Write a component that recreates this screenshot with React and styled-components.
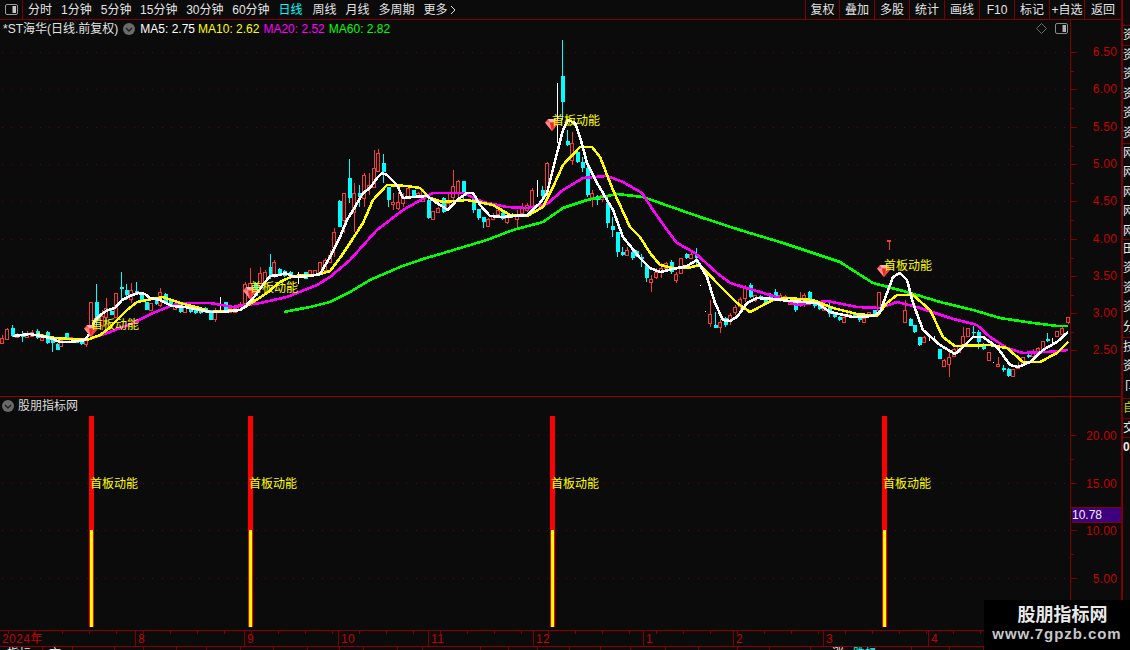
import React from 'react';
import styled, { createGlobalStyle } from 'styled-components';

const LINE = '#7d0000';
const BG = '#0b0b0b';
const CJK = '"Liberation Sans", "Noto Sans CJK SC", sans-serif';

const Global = createGlobalStyle`
  html, body { margin: 0; padding: 0; background: ${BG}; overflow: hidden; }
`;
const Page = styled.div`
  position: relative; width: 1130px; height: 650px; overflow: hidden; display: flex;
  background: ${BG}; font: 12px/16px ${CJK}; color: #e4e4e4;
`;
const Main = styled.div`
  width: 1121px; height: 650px; display: flex; flex-direction: column; flex: none;
`;
const Toolbar = styled.div`
  height: 19px; border-bottom: 1px solid ${LINE}; display: flex; align-items: stretch; flex: none;
`;
const ToggleBox = styled.div`
  width: 22px; border-right: 1px solid ${LINE}; display: flex; align-items: center; justify-content: center;
  margin-right: 5px;
`;
const Periods = styled.div`
  display: flex; gap: 9px; align-items: center; flex: 1;
`;
const Period = styled.span`
  color: ${p => (p.$active ? '#00ffff' : '#e4e4e4')}; white-space: nowrap; display: inline-flex; align-items: center; gap: 3px;
  margin-right: ${p => p.$mr || 0}px;
`;
const Actions = styled.div`display: flex;`;
const Action = styled.div`
  width: ${p => p.$w}px; box-sizing: border-box; border-left: 1px solid ${LINE};
  display: flex; align-items: center; justify-content: center; white-space: nowrap;
`;
const Pane = styled.div`
  display: flex; flex: none; height: ${p => p.$h}px; border-bottom: ${p => (p.$line ? `1px solid #960000` : 'none')};
`;
const ChartArea = styled.div`
  position: relative; width: 1070px; flex: none; overflow: hidden;
`;
const ChartSvg = styled.svg`display: block;`;
const Legend = styled.div`
  position: absolute; left: 3px; top: 1px; height: 16px; display: flex; align-items: center; white-space: nowrap;
`;
const LegendItem = styled.span`
  color: ${p => p.$c}; margin-left: ${p => p.$ml}px;
`;
const LegendIcon = styled.span`
  display: inline-flex; margin-left: 5px; margin-right: 5px;
`;
const CornerIcons = styled.div`
  position: absolute; right: 2px; top: 3px; display: flex; gap: 8px; align-items: center;
`;
const PaneTitle = styled.div`
  position: absolute; left: 2px; top: 1px; height: 16px; display: flex; align-items: center; gap: 4px; color: #dcdcdc;
`;
const Signal = styled.span`
  position: absolute; left: ${p => p.$x}px; top: ${p => p.$y}px; color: #ffff00; white-space: nowrap; line-height: 16px;
`;
const Axis = styled.div`
  position: relative; width: 51px; box-sizing: border-box; border-left: 1px solid ${LINE}; flex: none;
`;
const Tick = styled.i`
  position: absolute; left: 0; top: ${p => p.$y}px; height: 1px; width: ${p => (p.$major ? 6 : 3)}px; background: ${LINE};
`;
const AxisLabel = styled.span`
  position: absolute; right: 4px; top: ${p => p.$y - 8}px; color: #c40000; letter-spacing: 0.2px;
`;
const PriceTag = styled.div`
  position: absolute; left: 1px; right: 0; top: 110px; height: 16px; background: #3f0080; color: #f0f0f0;
  border-top: 1px solid #8a0000; border-bottom: 1px solid #8a0000; box-sizing: border-box; line-height: 14px;
`;
const TimeAxis = styled.div`
  height: 15px; flex: none; border-top: 1px solid #8a0000; border-bottom: 1px solid #8a0000; display: flex;
  background: repeating-linear-gradient(90deg, ${LINE} 0 1px, transparent 1px 27px) 8px 0 / 100% 3px no-repeat;
`;
const Month = styled.div`
  width: ${p => p.$w}px; box-sizing: border-box; flex: none; padding-left: 2px; color: #c40000; line-height: 16px;
  border-left: ${p => (p.$first ? 'none' : `1px solid ${LINE}`)}; letter-spacing: 0.4px;
`;
const TabRow = styled.div`
  height: 3px; display: flex; overflow: hidden; flex: none;
`;
const TabCell = styled.div`
  width: ${p => p.$w}px; flex: none; box-sizing: border-box; border-right: 1px solid ${LINE};
  padding-left: ${p => p.$pad}px; color: ${p => p.$c}; line-height: 14px; white-space: nowrap; overflow: hidden;
`;
const SideStrip = styled.div`
  width: 9px; box-sizing: border-box; border-left: 2px solid ${LINE}; padding-top: 25px; flex: none;
  display: flex; flex-direction: column; overflow: hidden;
`;
const SideGroup = styled.div`
  height: ${p => p.$h}px; box-sizing: border-box; border-top: 1px solid ${LINE}; overflow: hidden; flex: none;
  color: ${p => p.$c || '#e8e8e8'}; font-weight: ${p => (p.$bold ? 700 : 400)}; line-height: 19px; width: 24px;
`;
const SideChar = styled.div`height: 19.4px;`;
const Watermark = styled.div`
  position: absolute; left: 984px; top: 600px; width: 146px; height: 50px; background: #000;
  display: flex; flex-direction: column; align-items: center;
`;
const MarkTitle = styled.div`
  margin: 5px 0 0 11px; font: 700 18px/20px ${CJK}; color: #e8e8e8;
`;
const MarkUrl = styled.div`
  margin-top: 1px; font: 700 15px/16px "Liberation Sans", sans-serif; color: #c8c8c8; letter-spacing: 0.95px;
`;
const Curve = styled.polyline`
  fill: none; stroke: ${p => p.$c}; stroke-width: 2.6; shape-rendering: crispEdges; stroke-linejoin: round;
`;
const GridLine = styled.line`
  stroke: #6e0000; stroke-width: 1; stroke-dasharray: 1 8.4; shape-rendering: crispEdges;
`;
const Wick = styled.line`
  stroke: ${p => p.$c}; stroke-width: 1; shape-rendering: crispEdges;
`;
const Body = styled.rect`
  fill: ${p => p.$fill}; stroke: ${p => p.$stroke}; stroke-width: 1; shape-rendering: crispEdges;
`;
const Bar = styled.rect`
  fill: ${p => p.$c}; shape-rendering: crispEdges;
`;

const WHITE = '13,336 30,334 40,336 50,338 60,342 70,342 85,340 88,336 95,320 103,313 108,310 115,308 122,300 130,296 138,293 145,294 150,298 160,300 172,306 185,307 200,310 210,312 222,312 240,310 246,306 255,296 262,286 270,276 280,275 285,273 295,277 310,276 320,274 330,257 340,237 347,220 355,207 363,193 370,188 377,178 382,173 387,175 397,185 403,198 413,197 427,196 437,203 448,210 457,200 467,193 473,193 480,205 490,216 503,217 527,215 540,203 547,193 557,153 563,130 568,120 575,123 580,137 587,163 597,183 613,210 623,237 640,258 650,268 660,272 673,269 687,266 697,260 707,277 715,303 723,320 730,321 737,317 747,303 757,298 773,299 790,301 817,303 830,312 853,317 873,316 880,312 887,293 893,277 900,273 907,280 913,303 923,330 940,345 955,354 962,348 973,337 983,337 997,347 1010,365 1018,367 1030,362 1043,350 1057,342 1068,332';
const YELLOW = '37,334 43,336 55,338 70,339 87,340 100,335 107,330 117,320 127,310 137,302 147,300 163,297 180,303 200,308 210,312 240,310 253,302 267,293 280,282 293,276 317,275 330,271 340,258 350,243 363,223 373,200 387,185 407,186 420,188 430,198 443,202 467,200 493,205 510,215 527,216 543,207 553,187 563,165 580,147 592,147 600,157 613,190 630,227 640,237 650,253 660,265 673,268 687,268 700,265 717,283 737,303 750,312 773,300 787,298 813,300 833,308 857,314 877,316 887,303 897,295 913,295 930,310 943,337 955,346 990,345 1007,348 1023,362 1040,362 1057,353 1068,342';
const MAGENTA = '87,340 110,332 133,323 153,313 173,305 187,303 210,303 233,307 260,303 287,297 317,285 330,277 350,260 377,230 403,210 433,193 463,193 483,202 507,207 527,208 547,204 563,190 583,178 607,176 623,182 642,193 653,210 667,230 677,243 695,253 717,273 730,283 750,289 780,298 797,305 827,301 857,307 880,308 897,302 917,307 950,318 977,325 990,337 1007,348 1023,353 1047,352 1068,350';
const GREEN = '284,312 310,307 330,302 350,292 370,280 400,267 423,259 447,252 487,240 513,230 543,222 563,208 587,200 617,194 643,197 660,203 700,217 740,230 783,243 840,262 873,283 907,292 940,302 973,310 1000,318 1033,323 1058,326 1068,326';

const CANDLES = [
  [2,335,338,343,344,'r'],[7,328,329,339,339,'r'],[12,325,328,336,337,'c'],[17,333,334,337,338,'r'],[22,331,335,337,342,'c'],[27,331,333,337,338,'r'],[32,330,332,336,337,'r'],[37,329,331,338,339,'c'],[42,334,334,340,340,'r'],[47,331,332,343,344,'c'],[52,338,338,343,352,'c'],[57,343,344,350,350,'c'],[61,340,340,346,347,'r'],[66,333,333,338,338,'c'],[71,337,337,341,342,'r'],[76,339,339,343,343,'c'],[81,340,341,344,345,'c'],[86,338,338,344,347,'r'],
  [91,302,302,325,330,'r'],[96,284,302,320,327,'c'],[102,310,316,325,330,'r'],[106,298,308,317,323,'r'],[111,310,311,315,315,'c'],[116,293,293,317,317,'r'],[121,272,287,289,303,'c'],[126,284,290,295,300,'c'],[131,283,290,299,303,'r'],[136,282,291,294,295,'c'],[141,295,295,301,301,'c'],[146,302,302,310,310,'c'],[151,303,303,310,310,'r'],[156,297,297,304,305,'c'],[160,288,292,305,307,'r'],[165,293,294,302,302,'c'],[170,298,299,306,307,'c'],[175,303,304,309,310,'r'],[180,304,305,312,313,'c'],[185,306,306,312,313,'r'],[190,306,307,312,313,'c'],[195,307,308,313,314,'c'],[200,308,309,313,314,'c'],[205,307,308,312,313,'c'],[210,310,310,320,320,'c'],[215,308,310,319,322,'r'],[220,297,300,312,312,'w'],[225,302,302,312,312,'c'],[230,307,308,312,312,'r'],[235,307,308,312,312,'r'],[240,302,304,310,311,'r'],[245,282,284,303,304,'r'],[250,268,283,297,300,'r'],[255,282,283,296,297,'c'],[260,267,273,287,290,'r'],[265,270,272,283,285,'r'],[270,254,267,277,279,'c'],[274,260,262,276,278,'r'],[279,268,269,276,276,'c'],[284,270,271,276,277,'c'],[290,271,272,278,278,'c'],[298,272,273,284,284,'w'],[305,272,272,279,279,'c'],[310,270,270,275,276,'r'],[315,270,270,275,276,'r'],[320,262,262,272,272,'r'],[325,258,260,270,270,'r'],[330,250,255,262,262,'r'],
  [334,228,232,247,257,'r'],[339,200,201,227,227,'c'],[344,193,193,220,233,'r'],[349,159,178,198,203,'c'],[354,183,193,212,232,'r'],[359,185,193,197,207,'c'],[364,173,175,198,207,'r'],[369,173,185,187,195,'r'],[374,150,168,187,187,'r'],[378,149,153,171,172,'r'],[383,154,163,172,183,'c'],[388,187,187,200,207,'c'],[393,193,202,204,210,'r'],[398,192,202,208,210,'r'],[403,193,198,203,207,'r'],[408,185,188,197,198,'r'],[413,190,190,197,198,'c'],[418,192,193,197,198,'r'],[423,189,191,201,202,'r'],[428,197,200,218,219,'c'],[433,211,211,219,220,'r'],[438,207,208,212,213,'r'],[443,197,198,212,213,'c'],[448,193,203,208,210,'r'],[453,170,186,197,200,'r'],[458,180,181,193,200,'r'],[463,181,181,193,200,'c'],[473,198,199,210,213,'c'],[478,209,209,218,220,'c'],[483,217,217,222,228,'c'],[488,218,219,226,227,'r'],[493,213,215,219,220,'r'],[498,207,210,214,215,'r'],[502,210,213,219,220,'c'],[507,215,216,222,224,'r'],[512,213,214,217,218,'c'],[517,210,216,219,228,'r'],[522,203,208,213,214,'r'],[527,203,205,210,212,'r'],[532,188,190,206,207,'r'],[537,180,184,186,197,'w'],[542,186,190,196,197,'c'],[547,162,163,193,193,'r'],
  [557,83,85,87,143,'w'],[562,40,76,102,120,'c'],[567,130,141,145,146,'c'],[572,132,143,160,165,'r'],[577,152,152,162,163,'c'],[582,157,162,168,172,'c'],[587,167,168,195,197,'c'],[592,190,193,197,207,'r'],[597,195,196,200,205,'c'],[602,193,195,199,202,'r'],[607,197,203,223,228,'c'],[612,217,226,230,237,'c'],[617,232,232,252,257,'c'],[622,247,252,255,256,'c'],[627,247,250,255,256,'r'],[632,250,252,258,260,'c'],[636,250,251,256,257,'c'],
  [641,254,257,259,267,'c'],[646,263,265,278,282,'c'],[651,275,279,282,292,'r'],[656,268,272,277,279,'r'],[661,263,268,271,278,'r'],[666,262,263,268,272,'r'],[671,260,262,272,274,'c'],[676,272,274,280,283,'r'],[681,258,258,273,274,'r'],[686,253,254,258,259,'c'],[691,253,254,258,259,'r'],[696,248,255,258,267,'c'],[700,285,285,286,286,'w'],[705,311,311,312,312,'w'],[710,300,314,323,327,'r'],[715,312,325,328,328,'c'],[720,319,322,327,333,'r'],[725,317,318,325,327,'c'],[730,313,315,320,325,'r'],[735,305,307,312,315,'r'],[740,297,299,306,310,'r'],[745,285,288,298,302,'r'],[750,283,285,297,298,'c'],[755,295,295,300,302,'r'],[760,295,296,299,300,'c'],[765,298,299,303,305,'c'],[770,293,294,300,302,'c'],[775,289,292,298,298,'c'],[780,293,295,300,302,'r'],[785,295,296,300,302,'r'],[790,298,300,304,305,'r'],[795,302,303,310,312,'c'],[800,292,298,301,307,'r'],[804,293,295,300,307,'r'],[809,291,292,299,300,'c'],[814,300,302,306,308,'c'],[819,305,306,309,310,'c'],[824,305,306,310,311,'r'],[829,303,307,314,317,'c'],[834,312,313,317,318,'c'],[839,316,317,320,321,'c'],[844,316,317,322,323,'r'],[849,310,311,314,315,'r'],[854,312,313,316,317,'c'],[859,315,316,320,322,'c'],[864,317,318,322,323,'r'],[869,312,312,315,316,'r'],[874,310,310,314,315,'c'],[879,292,292,310,310,'r'],
  [889,240,240,241,250,'r'],[905,300,310,322,322,'r'],[910,318,319,326,326,'c'],[914,325,325,332,333,'c'],[919,337,337,345,346,'c'],[924,336,337,342,343,'r'],[929,337,337,338,341,'w'],[934,336,336,338,340,'w'],[939,349,349,359,359,'c'],[944,359,360,366,366,'r'],[949,350,357,364,377,'r'],[954,348,349,356,357,'r'],[959,346,346,352,352,'r'],[963,327,336,345,346,'r'],[968,328,328,336,337,'r'],[973,326,332,333,337,'c'],[978,330,332,342,349,'c'],[983,343,344,349,350,'c'],[989,352,352,360,361,'r'],[993,362,362,363,363,'w'],[998,357,364,366,366,'r'],[1003,365,368,370,372,'c'],[1008,368,369,376,377,'c'],[1013,369,369,376,377,'r'],[1018,362,365,368,369,'r'],[1023,357,357,364,365,'r'],[1028,353,355,357,358,'c'],[1033,349,352,356,357,'r'],[1038,347,348,352,354,'r'],[1043,341,341,350,350,'r'],[1047,333,339,341,342,'c'],[1052,338,340,342,345,'w'],[1057,331,331,336,337,'r'],[1062,327,328,334,335,'r'],[1068,317,317,322,324,'r'],
];
const COLORS = { r: '#f53a3a', c: '#00ffff', w: '#ffffff' };

const Candle = ({ d: [x, hi, top, bot, lo, c] }) => (
  <g>
    <Wick $c={COLORS[c]} x1={x + 0.5} x2={x + 0.5} y1={hi} y2={lo} />
    {c === 'r' && <Body $fill={BG} $stroke={COLORS.r} x={x - 1.5} y={top + 0.5} width={3} height={Math.max(bot - top, 1)} />}
    {c === 'c' && <Bar $c={COLORS.c} x={x - 1} y={top} width={4} height={Math.max(bot - top, 1)} />}
  </g>
);

const Gem = ({ x, y }) => (
  <g transform={`translate(${x} ${y})`}>
    <polygon points="3,0 11,0 14,3.5 7,12 0,3.5" fill="#f55a5a" />
    <polygon points="3,0 11,0 9,3.5 5,3.5" fill="#ffb0b0" />
    <polygon points="0,3.5 5,3.5 7,12" fill="#ff8a8a" />
    <polygon points="5,3.5 9,3.5 7,12" fill="#ee2222" />
    <polygon points="9,3.5 14,3.5 7,12" fill="#f04040" />
  </g>
);

const CircleChevron = () => (
  <svg width="12" height="12" viewBox="0 0 12 12">
    <circle cx="6" cy="6" r="6" fill="#6a6a6a" />
    <path d="M3 5l3 3 3-3" fill="none" stroke="#1c1c1c" strokeWidth="1.3" />
  </svg>
);
const PanelToggle = ({ color = '#8a8a8a' }) => (
  <svg width="13" height="11" viewBox="0 0 13 11">
    <rect x="0.5" y="0.5" width="12" height="10" rx="1.5" fill="none" stroke={color} />
    <rect x="7.5" y="2" width="3.5" height="7" fill={color === '#8a8a8a' ? '#b0b0b0' : '#c8c8c8'} />
  </svg>
);

const PRICE_GRID = [52, 89, 127, 164, 201, 239, 276, 313, 350];
const PRICE_LABELS = ['6.50', '6.00', '5.50', '5.00', '4.50', '4.00', '3.50', '3.00', '2.50'];
const SUB_GRID = [435, 483, 530, 578];
const SUB_LABELS = ['20.00', '15.00', '10.00', '5.00'];
const SIGNALS = [
  { bar: 89, gemX: 84, gemY: 325, x: 91, y: 324 },
  { bar: 248, gemX: 243, gemY: 287, x: 250, y: 287 },
  { bar: 550, gemX: 545, gemY: 119, x: 552, y: 120 },
  { bar: 882, gemX: 877, gemY: 265, x: 884, y: 265 },
];
const PERIODS = [['分时', 0], ['1分钟', 0], ['5分钟', -0.3], ['15分钟', -0.3], ['30分钟', -0.3], ['60分钟', -0.2], ['日线', 1], ['周线', 0], ['月线', 0], ['多周期', 0]];
const ACTIONS = [['复权', 34], ['叠加', 35], ['多股', 35], ['统计', 35], ['画线', 35], ['F10', 35], ['标记', 35], ['+自选', 35], ['返回', 37]];
const MONTHS = [['2024年', 135], ['8', 109], ['9', 94], ['10', 90], ['11', 105], ['12', 110], ['1', 90], ['2', 90], ['3', 105], ['4', 193]];
const TAB_EDGES = [43, 73, 115, 144, 177, 207, 241, 274, 308, 340, 364, 398, 423, 481, 509, 538, 570, 601, 631, 666, 699, 738, 770, 811, 844, 876, 912, 950, 984];
const TAB_TEXT = {
  0: { t: '指标', pad: 7, c: '#e8e8e8' },
  1: { t: '市', pad: 6, c: '#e8e8e8' },
  24: { t: '涨', pad: 21, c: '#e8e8e8' },
  25: { t: '跌幅', pad: 9, c: '#00ffff' },
};
const SIDE = [
  { h: 20, t: '资' }, { h: 98, t: '资资资资资' }, { h: 96, t: '网网网网网' }, { h: 98, t: '田资资资分' },
  { h: 61, t: '技资卩' }, { h: 20, t: '自', c: '#c8c800' }, { h: 19, t: '交' }, { h: 30, t: '0', bold: true },
];

const ticks = (list) => list.flatMap((y, i) => {
  const next = list[i + 1];
  return next ? [{ y, major: true }, { y: Math.round((y + next) / 2), major: false }] : [{ y, major: true }];
});

export default function App() {
  return (
    <Page>
      <Global />
      <Main>
        <Toolbar>
          <ToggleBox><PanelToggle color="#9a9a9a" /></ToggleBox>
          <Periods>
            {PERIODS.map(([p, mr]) => <Period key={p} $active={p === '日线'} $mr={mr}>{p}</Period>)}
            <Period>更多
              <svg width="6" height="10" viewBox="0 0 6 10"><path d="M1 1l4 4-4 4" fill="none" stroke="#e4e4e4" /></svg>
            </Period>
          </Periods>
          <Actions>
            {ACTIONS.map(([t, w]) => <Action key={t} $w={w}>{t}</Action>)}
          </Actions>
        </Toolbar>

        <Pane $h={376} $line>
          <ChartArea>
            <ChartSvg width="1070" height="376" viewBox="0 20 1070 376">
              {PRICE_GRID.map(y => <GridLine key={y} x1="2" x2="1070" y1={y + 0.5} y2={y + 0.5} />)}
              {CANDLES.map((d, i) => <Candle key={i} d={d} />)}
              <Curve $c="#00ff00" points={GREEN} />
              <Curve $c="#ff00ff" points={MAGENTA} />
              <Curve $c="#ffff00" points={YELLOW} />
              <Curve $c="#ffffff" points={WHITE} />
              {SIGNALS.map(s => <Gem key={s.bar} x={s.gemX} y={s.gemY} />)}
            </ChartSvg>
            <Legend>
              <LegendItem $c="#e4e4e4" $ml={0}>*ST海华(日线.前复权)</LegendItem>
              <LegendIcon><CircleChevron /></LegendIcon>
              <LegendItem $c="#ffffff" $ml={0}>MA5: 2.75</LegendItem>
              <LegendItem $c="#ffff00" $ml={3}>MA10: 2.62</LegendItem>
              <LegendItem $c="#ff00ff" $ml={4}>MA20: 2.52</LegendItem>
              <LegendItem $c="#00ff00" $ml={4}>MA60: 2.82</LegendItem>
            </Legend>
            <CornerIcons>
              <svg width="11" height="11" viewBox="0 0 11 11"><path d="M5.5 .5l5 5-5 5-5-5z" fill="none" stroke="#6a6a6a" /></svg>
              <PanelToggle />
            </CornerIcons>
            {SIGNALS.map(s => <Signal key={s.bar} $x={s.x} $y={s.y - 27}>首板动能</Signal>)}
          </ChartArea>
          <Axis>
            {ticks(PRICE_GRID).map(t => <Tick key={t.y} $y={t.y - 20} $major={t.major} />)}
            {PRICE_LABELS.map((l, i) => <AxisLabel key={l} $y={PRICE_GRID[i] - 20}>{l}</AxisLabel>)}
          </Axis>
        </Pane>

        <Pane $h={233}>
          <ChartArea>
            <ChartSvg width="1070" height="233" viewBox="0 397 1070 233">
              {SUB_GRID.map(y => <GridLine key={y} x1="2" x2="1070" y1={y + 0.5} y2={y + 0.5} />)}
              {SIGNALS.map(s => (
                <g key={s.bar}>
                  <Bar $c="#ff0000" x={s.bar} y={416} width={5} height={211} />
                  <Bar $c="#ffff00" x={s.bar + 1} y={530} width={3} height={97} />
                </g>
              ))}
            </ChartSvg>
            <PaneTitle><CircleChevron />股朋指标网</PaneTitle>
            {SIGNALS.map(s => <Signal key={s.bar} $x={s.bar + 1} $y={79}>首板动能</Signal>)}
          </ChartArea>
          <Axis>
            {ticks(SUB_GRID).map(t => <Tick key={t.y} $y={t.y - 397} $major={t.major} />)}
            {SUB_LABELS.map((l, i) => <AxisLabel key={l} $y={SUB_GRID[i] - 396}>{l}</AxisLabel>)}
            <PriceTag>10.78</PriceTag>
          </Axis>
        </Pane>

        <TimeAxis>
          {MONTHS.map(([t, w], i) => <Month key={t} $w={w} $first={i === 0}>{t}</Month>)}
        </TimeAxis>
        <TabRow>
          {TAB_EDGES.map((edge, i) => {
            const tab = TAB_TEXT[i] || { t: '', pad: 0, c: '#e8e8e8' };
            return <TabCell key={edge} $w={edge - (TAB_EDGES[i - 1] || 0)} $pad={tab.pad} $c={tab.c}>{tab.t}</TabCell>;
          })}
        </TabRow>
      </Main>
      <SideStrip>
        {SIDE.map((g, i) => (
          <SideGroup key={i} $h={g.h} $c={g.c} $bold={g.bold}>
            {[...g.t].map((ch, k) => <SideChar key={k}>{ch}</SideChar>)}
          </SideGroup>
        ))}
      </SideStrip>
      <Watermark>
        <MarkTitle>股朋指标网</MarkTitle>
        <MarkUrl>www.7gpzb.com</MarkUrl>
      </Watermark>
    </Page>
  );
}
